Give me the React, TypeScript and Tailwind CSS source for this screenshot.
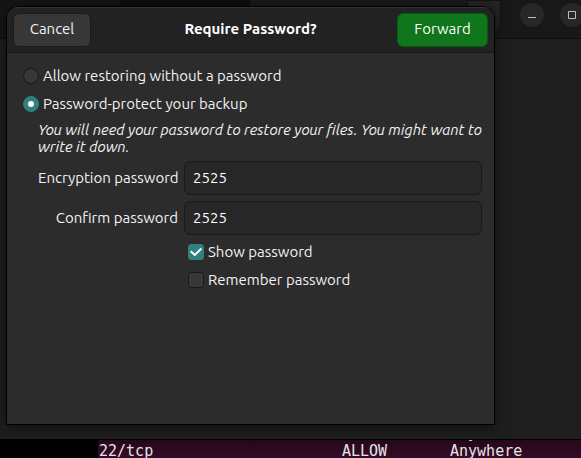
import { useState } from "react";
import type { ReactNode } from "react";

function RadioRow({ checked, onSelect, children }: { checked: boolean; onSelect: () => void; children: ReactNode }) {
  return (
    <label className="flex h-7 items-center gap-1">
      <input
        type="radio"
        name="protection"
        checked={checked}
        onChange={onSelect}
        className="grid size-4 shrink-0 appearance-none place-items-center rounded-full border border-[#1a1a1a] bg-[#373737] before:size-1.5 before:rounded-full checked:border-[#2f8180] checked:bg-[#2f8180] checked:before:bg-white"
      />
      {children}
    </label>
  );
}

function CheckRow({ checked, onToggle, children }: { checked: boolean; onToggle: () => void; children: ReactNode }) {
  return (
    <label className="flex h-7 items-center gap-1 pl-1">
      <span className="grid size-4 shrink-0 place-items-center">
        <input
          type="checkbox"
          checked={checked}
          onChange={onToggle}
          className="col-start-1 row-start-1 size-4 appearance-none rounded-[3px] border border-[#1a1a1a] bg-[#373737] checked:border-[#2f8180] checked:bg-[#2f8180]"
        />
        {checked && (
          <svg viewBox="0 0 16 16" className="pointer-events-none col-start-1 row-start-1 size-4" fill="none" stroke="#fff" strokeWidth="2" aria-hidden="true">
            <path d="M2.7 7.3 6.8 11 13.4 4.5" />
          </svg>
        )}
      </span>
      {children}
    </label>
  );
}

function PasswordRow({ id, label, value, onChange, type }: { id: string; label: string; value: string; onChange: (v: string) => void; type: string }) {
  return (
    <div className="grid grid-cols-[140px_1fr] items-center gap-1.5">
      <label htmlFor={id} className="whitespace-nowrap text-right">{label}</label>
      <input
        id={id}
        type={type}
        value={value}
        onChange={(e) => onChange(e.target.value)}
        className="h-[34px] w-full min-w-0 rounded-md border border-[#1a1a1a] bg-[#272727] px-2 pb-0.5 text-white outline-none"
      />
    </div>
  );
}

function Desktop() {
  return (
    <div className="absolute inset-x-0 top-0 -bottom-0.5 flex flex-col">
      <div className="flex h-[39px] shrink-0 border-b border-[#0e0e0e] bg-[#181818]">
        <div className="w-[120px] shrink-0 bg-[#151515]" />
        <div className="w-[130px] shrink-0 bg-[#0d0d0d]" />
        <div className="ml-[217px] h-[31px] w-[34px] shrink-0 rounded-b-md border border-[#111] bg-[#242424]" />
        <button aria-label="Minimize" className="mt-[3px] ml-[19px] grid size-6 shrink-0 place-items-center rounded-full bg-[#272727]">
          <svg viewBox="0 0 24 24" className="size-6" fill="none" stroke="#bdbdbd" aria-hidden="true">
            <path d="M8 14.5h8" />
          </svg>
        </button>
        <button aria-label="Maximize" className="mt-[3px] ml-4 grid size-6 shrink-0 place-items-center rounded-full bg-[#272727]">
          <svg viewBox="0 0 24 24" className="size-6" fill="none" stroke="#bdbdbd" aria-hidden="true">
            <path d="M8.5 8.5h7v7h-7z" />
          </svg>
        </button>
      </div>
      <div className="grow bg-[#1e1e1e]" />
      <div className="flex h-[21px] shrink-0 overflow-hidden border-t border-black bg-black">
        <div className="w-[98px] shrink-0" />
        <div className="flex grow flex-col justify-end overflow-hidden bg-linear-to-b from-[#260819] to-[#380c29] pl-px font-['DejaVu_Sans_Mono',monospace] text-[15px] leading-[18px] text-[#e4e4e4]">
          <div className="grid shrink-0 grid-cols-[243px_108px_1fr]">
            <span />
            <span />
            <span>Anywhere</span>
          </div>
          <div className="grid shrink-0 grid-cols-[243px_108px_1fr]">
            <span>22/tcp</span>
            <span>ALLOW</span>
            <span>Anywhere</span>
          </div>
        </div>
      </div>
    </div>
  );
}

export default function App() {
  const [protect, setProtect] = useState(true);
  const [password, setPassword] = useState("2525");
  const [confirm, setConfirm] = useState("2525");
  const [show, setShow] = useState(true);
  const [remember, setRemember] = useState(false);
  const type = show ? "text" : "password";

  return (
    <div className="relative h-screen overflow-hidden bg-[#1e1e1e] pt-1.5 pr-[86px] pl-1.5 font-[Ubuntu,'Noto_Sans',sans-serif] text-[15px] leading-4 text-[#f2f2f2]">
      <Desktop />
      <form
        onSubmit={(e) => e.preventDefault()}
        className="relative min-h-[419px] overflow-hidden rounded-t-xl border border-black bg-[#2c2c2c] shadow-[0_3px_14px_rgba(0,0,0,0.5)]"
      >
        <header className="grid h-[46px] grid-cols-[1fr_auto_1fr] items-center border-b border-[#181818] bg-[#222] px-1.5 shadow-[inset_0_1px_0_#333]">
          <button type="button" className="h-[34px] w-[78px] rounded-md border border-[#1a1a1a] bg-[#373737] pb-0.5">Cancel</button>
          <h1 className="pb-0.5 font-bold text-white">Require Password?</h1>
          <button type="submit" className="h-[34px] w-[91px] justify-self-end rounded-md border border-[#0b5714] bg-[#0f761b] pb-0.5 text-white">Forward</button>
        </header>
        <div className="pt-[9px] pr-3 pl-4">
          <RadioRow checked={!protect} onSelect={() => setProtect(false)}>Allow restoring without a password</RadioRow>
          <RadioRow checked={protect} onSelect={() => setProtect(true)}>Password-protect your backup</RadioRow>
          <div className="mt-[3px] pl-[15px]">
            <p className="leading-[17px] italic">You will need your password to restore your files. You might want to write it down.</p>
            <div className="mt-1.5 flex flex-col gap-1.5">
              <PasswordRow id="password" label="Encryption password" value={password} onChange={setPassword} type={type} />
              <PasswordRow id="confirm" label="Confirm password" value={confirm} onChange={setConfirm} type={type} />
            </div>
            <div className="mt-[3px] flex flex-col items-start pl-[146px]">
              <CheckRow checked={show} onToggle={() => setShow(!show)}>Show password</CheckRow>
              <CheckRow checked={remember} onToggle={() => setRemember(!remember)}>Remember password</CheckRow>
            </div>
          </div>
        </div>
      </form>
    </div>
  );
}
